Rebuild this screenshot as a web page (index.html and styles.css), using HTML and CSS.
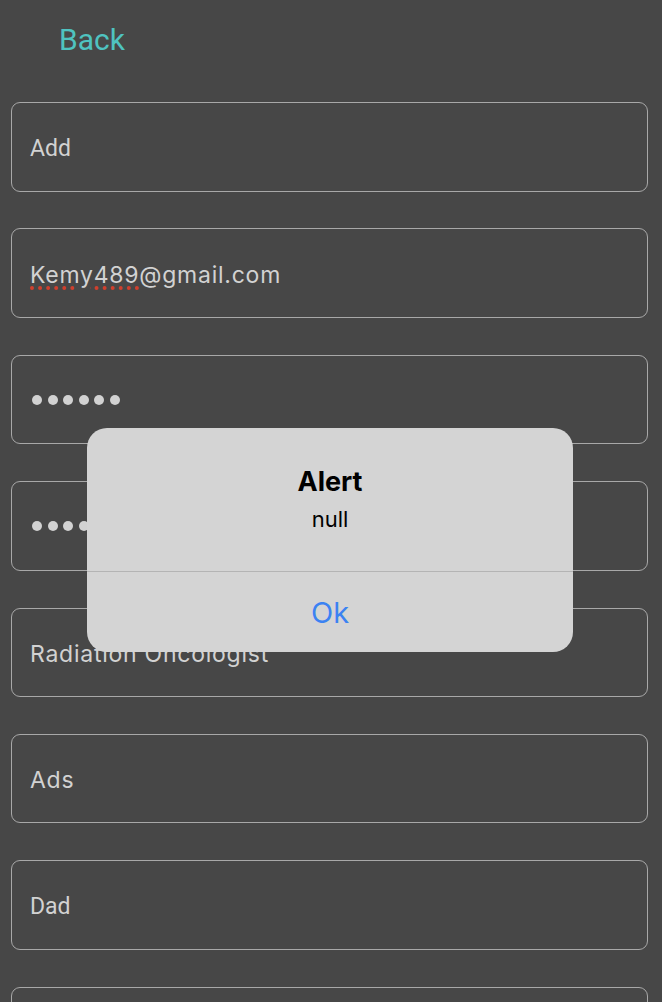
FILE: index.html
```html
<!DOCTYPE html>
<html>
<head>
<meta charset="utf-8">
<link rel="stylesheet" href="styles.css">
</head>
<body>
<div class="screen">
  <div class="topbar"><span class="back">Back</span></div>
  <div class="form">
    <div class="field"><span class="val roboto">Add</span></div>
    <div class="field"><span class="val"><span class="spell">Kemy489</span>@gmail.com</span></div>
    <div class="field"><span class="dots"><i></i><i></i><i></i><i></i><i></i><i></i></span></div>
    <div class="field"><span class="dots"><i></i><i></i><i></i><i></i><i></i><i></i></span></div>
    <div class="field"><span class="val">Radiation Oncologist</span></div>
    <div class="field"><span class="val">Ads</span></div>
    <div class="field"><span class="val roboto">Dad</span></div>
    <div class="field"></div>
  </div>
  <div class="alert">
    <div class="alert-body">
      <div class="alert-title">Alert</div>
      <div class="alert-msg">null</div>
    </div>
    <div class="alert-btn">Ok</div>
  </div>
</div>
</body>
</html>
```
FILE: styles.css
```css
html, body {
  margin: 0;
  padding: 0;
  background: #474747;
}
.screen {
  position: relative;
  width: 662px;
  height: 1002px;
  overflow: hidden;
  background: #474747;
  font-family: "Inter", "Noto Sans", sans-serif;
}
.topbar {
  height: 102px;
  padding-left: 59px;
  box-sizing: border-box;
}
.back {
  display: inline-block;
  margin-top: 22px;
  font-family: "Roboto", sans-serif;
  font-size: 30px;
  line-height: 36px;
  color: #4fc3c0;
}
.form {
  display: flex;
  flex-direction: column;
  gap: 36.9px;
  padding: 0 14px 0 11px;
}
.field {
  height: 89.5px;
  flex-shrink: 0;
  border: 1.5px solid #a8a8a8;
  border-radius: 9px;
  box-sizing: border-box;
  display: flex;
  align-items: center;
  padding-left: 18px;
  padding-top: 3px;
}
.val {
  font-size: 23px;
  color: #d2d2d2;
  letter-spacing: 0.75px;
}
.val.roboto {
  font-family: "Roboto", sans-serif;
  font-size: 23px;
  letter-spacing: 0;
}
.spell {
  text-decoration: underline dotted #d0402e;
  text-decoration-thickness: 4px;
  text-underline-offset: 4px;
}
.dots {
  display: flex;
  gap: 5.5px;
  padding-left: 2px;
  margin-top: -2px;
}
.dots i {
  display: block;
  width: 10px;
  height: 10px;
  border-radius: 50%;
  background: #d2d2d2;
}
.alert {
  position: absolute;
  left: 87px;
  top: 428px;
  width: 486px;
  height: 224px;
  background: #d4d4d4;
  border-radius: 20px;
  display: flex;
  flex-direction: column;
  color: #000;
}
.alert-body {
  height: 144px;
  box-sizing: border-box;
  padding-top: 37px;
  text-align: center;
  border-bottom: 1px solid #b4b4b4;
}
.alert-title {
  font-weight: 700;
  font-size: 27px;
  line-height: 34px;
}
.alert-msg {
  font-size: 22px;
  line-height: 28px;
  margin-top: 6px;
}
.alert-btn {
  flex: 1;
  display: flex;
  align-items: center;
  justify-content: center;
  font-size: 29px;
  color: #3b82f2;
}
```
